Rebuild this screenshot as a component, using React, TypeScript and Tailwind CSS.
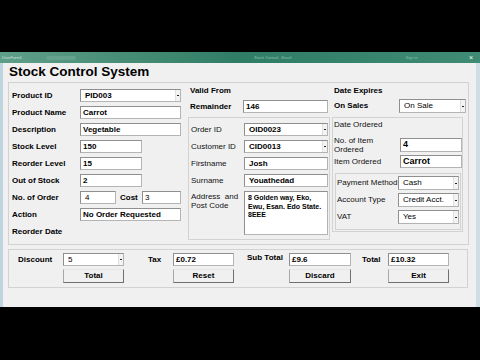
import React from 'react';

const font = "font-['Liberation_Sans',Arial,sans-serif]";

function Field({ className, value, bold = true, text = 'text-[8px]', pad = 'pl-[2px]' }: { className: string; value?: string; bold?: boolean; text?: string; pad?: string }) {
  return (
    <div className={`${className} bg-white border border-[#b4b4b4] border-t-[#8f8f8f] border-l-[#8f8f8f] ${pad} ${text} leading-[11px] text-black overflow-hidden ${bold ? 'font-bold' : 'font-normal'}`}>
      {value}
    </div>
  );
}

function Combo({ className, value, bold = true }: { className: string; value: string; bold?: boolean }) {
  return (
    <div className={`${className} bg-white border border-[#b4b4b4] border-t-[#8f8f8f] border-l-[#8f8f8f] flex text-black`}>
      <div className={`flex-1 pl-[4px] text-[8px] leading-[11px] ${bold ? 'font-bold' : 'font-normal'}`}>{value}</div>
      <div className="w-[5px] bg-[#f3f3f3] border-l border-[#e0e0e0] flex items-center justify-center">
        <div className="w-[2px] h-[1px] bg-[#222]" />
      </div>
    </div>
  );
}

function Button({ className, label }: { className: string; label: string }) {
  return (
    <div className={`${className} bg-[#f0f0f0] border border-l-[#a8a8a8] border-t-[#e6e6e6] border-r-[#6f6f6f] border-b-[#6f6f6f] flex items-center justify-center text-[8px] font-bold text-black`}>
      {label}
    </div>
  );
}

function LeftRow({ label, children }: { label: string; children?: React.ReactNode }) {
  return (
    <div className="flex items-center h-[13px]">
      <div className="w-[68px] text-[8px] font-bold text-black whitespace-nowrap">{label}</div>
      {children}
    </div>
  );
}

function MidRow({ label, children }: { label: string; children?: React.ReactNode }) {
  return (
    <div className="flex items-center h-[13px]">
      <div className="w-[53px] text-[8px] text-[#111] whitespace-nowrap">{label}</div>
      {children}
    </div>
  );
}

function PayRow({ label, children }: { label: string; children?: React.ReactNode }) {
  return (
    <div className="flex items-center h-[14px]">
      <div className="w-[61px] text-[8px] text-[#111] whitespace-nowrap">{label}</div>
      {children}
    </div>
  );
}

export default function App() {
  return (
    <div className={`w-[480px] h-[360px] bg-black flex flex-col overflow-hidden ${font}`}>
      <div className="h-[52px]" />

      {/* title bar */}
      <div className="h-[11px] flex items-center bg-gradient-to-r from-[#5f9f89] via-[#2f7d65] to-[#3f8b73] px-[2px]">
        <span className="text-[4px] text-[#e6f2ee] opacity-80">UserForm1</span>
        <div className="ml-[24px] w-[30px] h-[4px] bg-[#7db4a2] opacity-40 rounded" />
        <div className="ml-[178px] text-[4px] text-[#cfe7de] opacity-60">Stock Control - Excel</div>
        <div className="ml-[114px] text-[4px] text-[#cfe7de] opacity-50">Sign in</div>
        <div className="ml-auto mr-[5px] text-[7px] leading-[7px] text-white">×</div>
      </div>

      {/* form body */}
      <div className="h-[244px] bg-[#f0f0f0] border-l-[3px] border-l-[#bed4de] border-r-[4px] border-r-[#cfdde4]">
        <div className="h-[19px] pl-[6px] text-[13.5px] leading-[18px] font-bold text-black">Stock Control System</div>

        {/* main frame */}
        <div className="ml-[5px] w-[461px] h-[163px] border border-[#d2d2d2] flex">
          {/* left column */}
          <div className="w-[172px] pl-[3px] pt-[6px] flex flex-col gap-[4px]">
            <LeftRow label="Product ID"><Combo className="w-[101px] h-[13px]" value="PID003" /></LeftRow>
            <LeftRow label="Product Name"><Field className="w-[101px] h-[13px]" value="Carrot" /></LeftRow>
            <LeftRow label="Description"><Field className="w-[101px] h-[13px]" value="Vegetable" /></LeftRow>
            <LeftRow label="Stock Level"><Field className="w-[62px] h-[13px]" value="150" /></LeftRow>
            <LeftRow label="Reorder Level"><Field className="w-[62px] h-[13px]" value="15" /></LeftRow>
            <LeftRow label="Out of Stock"><Field className="w-[62px] h-[13px]" value="2" /></LeftRow>
            <LeftRow label="No. of Order">
              <Field className="w-[36px] h-[13px]" value="4" bold={false} pad="pl-[4px]" />
              <div className="w-[26px] pl-[4px] text-[8px] font-bold text-black">Cost</div>
              <Field className="w-[39px] h-[13px]" value="3" bold={false} />
            </LeftRow>
            <LeftRow label="Action"><Field className="w-[101px] h-[13px]" value="No Order Requested" /></LeftRow>
            <LeftRow label="Reorder Date" />
          </div>

          {/* middle column */}
          <div className="ml-[7px] w-[142px] flex flex-col">
            <div className="mt-[1px] h-[14px] pl-[2px] flex items-center text-[8px] font-bold text-black">Valid From</div>
            <div className="mt-[2px] h-[13px] pl-[2px] flex items-center">
              <div className="w-[53px] text-[8px] font-bold text-black">Remainder</div>
              <Field className="w-[85px] h-[13px]" value="146" />
            </div>
            <div className="mt-[4px] w-[142px] border border-[#d2d2d2] pt-[5px] pb-[4px] pl-[2px] flex flex-col gap-[4px]">
              <MidRow label="Order ID"><Combo className="w-[84px] h-[13px]" value="OID0023" /></MidRow>
              <MidRow label="Customer ID"><Combo className="w-[84px] h-[13px]" value="CID0013" /></MidRow>
              <MidRow label="Firstname"><Field className="w-[84px] h-[13px]" value="Josh" pad="pl-[4px]" /></MidRow>
              <MidRow label="Surname"><Field className="w-[84px] h-[13px]" value="Youathedad" pad="pl-[4px]" /></MidRow>
              <div className="flex items-start h-[44px]">
                <div className="w-[53px] text-[8px] leading-[9px] text-[#111] pt-[1px]">Address&nbsp;&nbsp;and<br />Post Code</div>
                <div className="w-[84px] h-[44px] bg-white border border-[#b4b4b4] border-t-[#8f8f8f] border-l-[#8f8f8f] pl-[3px] pt-[2px] text-[7px] leading-[8.5px] font-bold text-black whitespace-nowrap overflow-hidden">
                  8 Golden way, Eko,<br />Ewu, Esan. Edo State.<br />8EEE
                </div>
              </div>
            </div>
          </div>

          {/* right column */}
          <div className="ml-[2px] w-[136px] flex flex-col">
            <div className="mt-[1px] h-[14px] pl-[2px] flex items-center text-[8px] font-bold text-black">Date Expires</div>
            <div className="mt-[1px] h-[14px] pl-[2px] flex items-center">
              <div className="w-[65px] text-[8px] font-bold text-black">On Sales</div>
              <Combo className="w-[67px] h-[14px]" value="On Sale" bold={false} />
            </div>
            <div className="mt-[4px] w-[131px] border border-[#d2d2d2] pl-[1px] pb-[1px] flex flex-col">
              <div className="mt-[1px] h-[12px] flex items-center text-[8px] text-[#111]">Date Ordered</div>
              <div className="mt-[7px] h-[14px] flex items-center">
                <div className="w-[66px] text-[8px] leading-[9px] text-[#111]">No. of Item<br />Ordered</div>
                <Field className="w-[62px] h-[14px]" value="4" text="text-[9px]" />
              </div>
              <div className="mt-[3px] h-[13px] flex items-center">
                <div className="w-[66px] text-[8px] text-[#111]">Item Ordered</div>
                <Field className="w-[62px] h-[13px]" value="Carrot" text="text-[9px]" />
              </div>
              <div className="mt-[5px] ml-[1px] w-[126px] border border-[#d2d2d2] pl-[1px] pt-[2px] pb-[5px] flex flex-col gap-[3px]">
                <PayRow label="Payment Method"><Combo className="w-[61px] h-[14px]" value="Cash" bold={false} /></PayRow>
                <PayRow label="Account Type"><Combo className="w-[61px] h-[14px]" value="Credit Acct." bold={false} /></PayRow>
                <PayRow label="VAT"><Combo className="w-[61px] h-[14px]" value="Yes" bold={false} /></PayRow>
              </div>
            </div>
          </div>
        </div>

        {/* bottom frame */}
        <div className="mt-[4px] ml-[5px] w-[460px] h-[39px] border border-[#d2d2d2] pt-[3px] flex">
          <div className="ml-[9px] w-[45px] h-[13px] flex items-center text-[8px] font-bold text-black">Discount</div>
          <div className="flex flex-col gap-[3px]">
            <Combo className="w-[61px] h-[13px]" value="5" bold={false} />
            <Button className="w-[61px] h-[14px]" label="Total" />
          </div>
          <div className="ml-[24px] w-[25px] h-[13px] flex items-center text-[8px] font-bold text-black">Tax</div>
          <div className="flex flex-col gap-[3px]">
            <Field className="w-[61px] h-[13px]" value="£0.72" />
            <Button className="w-[61px] h-[14px]" label="Reset" />
          </div>
          <div className="ml-[13px] w-[42px] h-[10px] flex items-center text-[8px] font-bold text-black">Sub Total</div>
          <div className="flex flex-col gap-[3px]">
            <Field className="w-[62px] h-[13px]" value="£9.6" />
            <Button className="w-[62px] h-[14px]" label="Discard" />
          </div>
          <div className="ml-[11px] w-[26px] h-[13px] flex items-center text-[8px] font-bold text-black">Total</div>
          <div className="flex flex-col gap-[3px]">
            <Field className="w-[61px] h-[13px]" value="£10.32" />
            <Button className="w-[61px] h-[14px]" label="Exit" />
          </div>
        </div>
      </div>

      <div className="flex-1 bg-black" />
    </div>
  );
}
